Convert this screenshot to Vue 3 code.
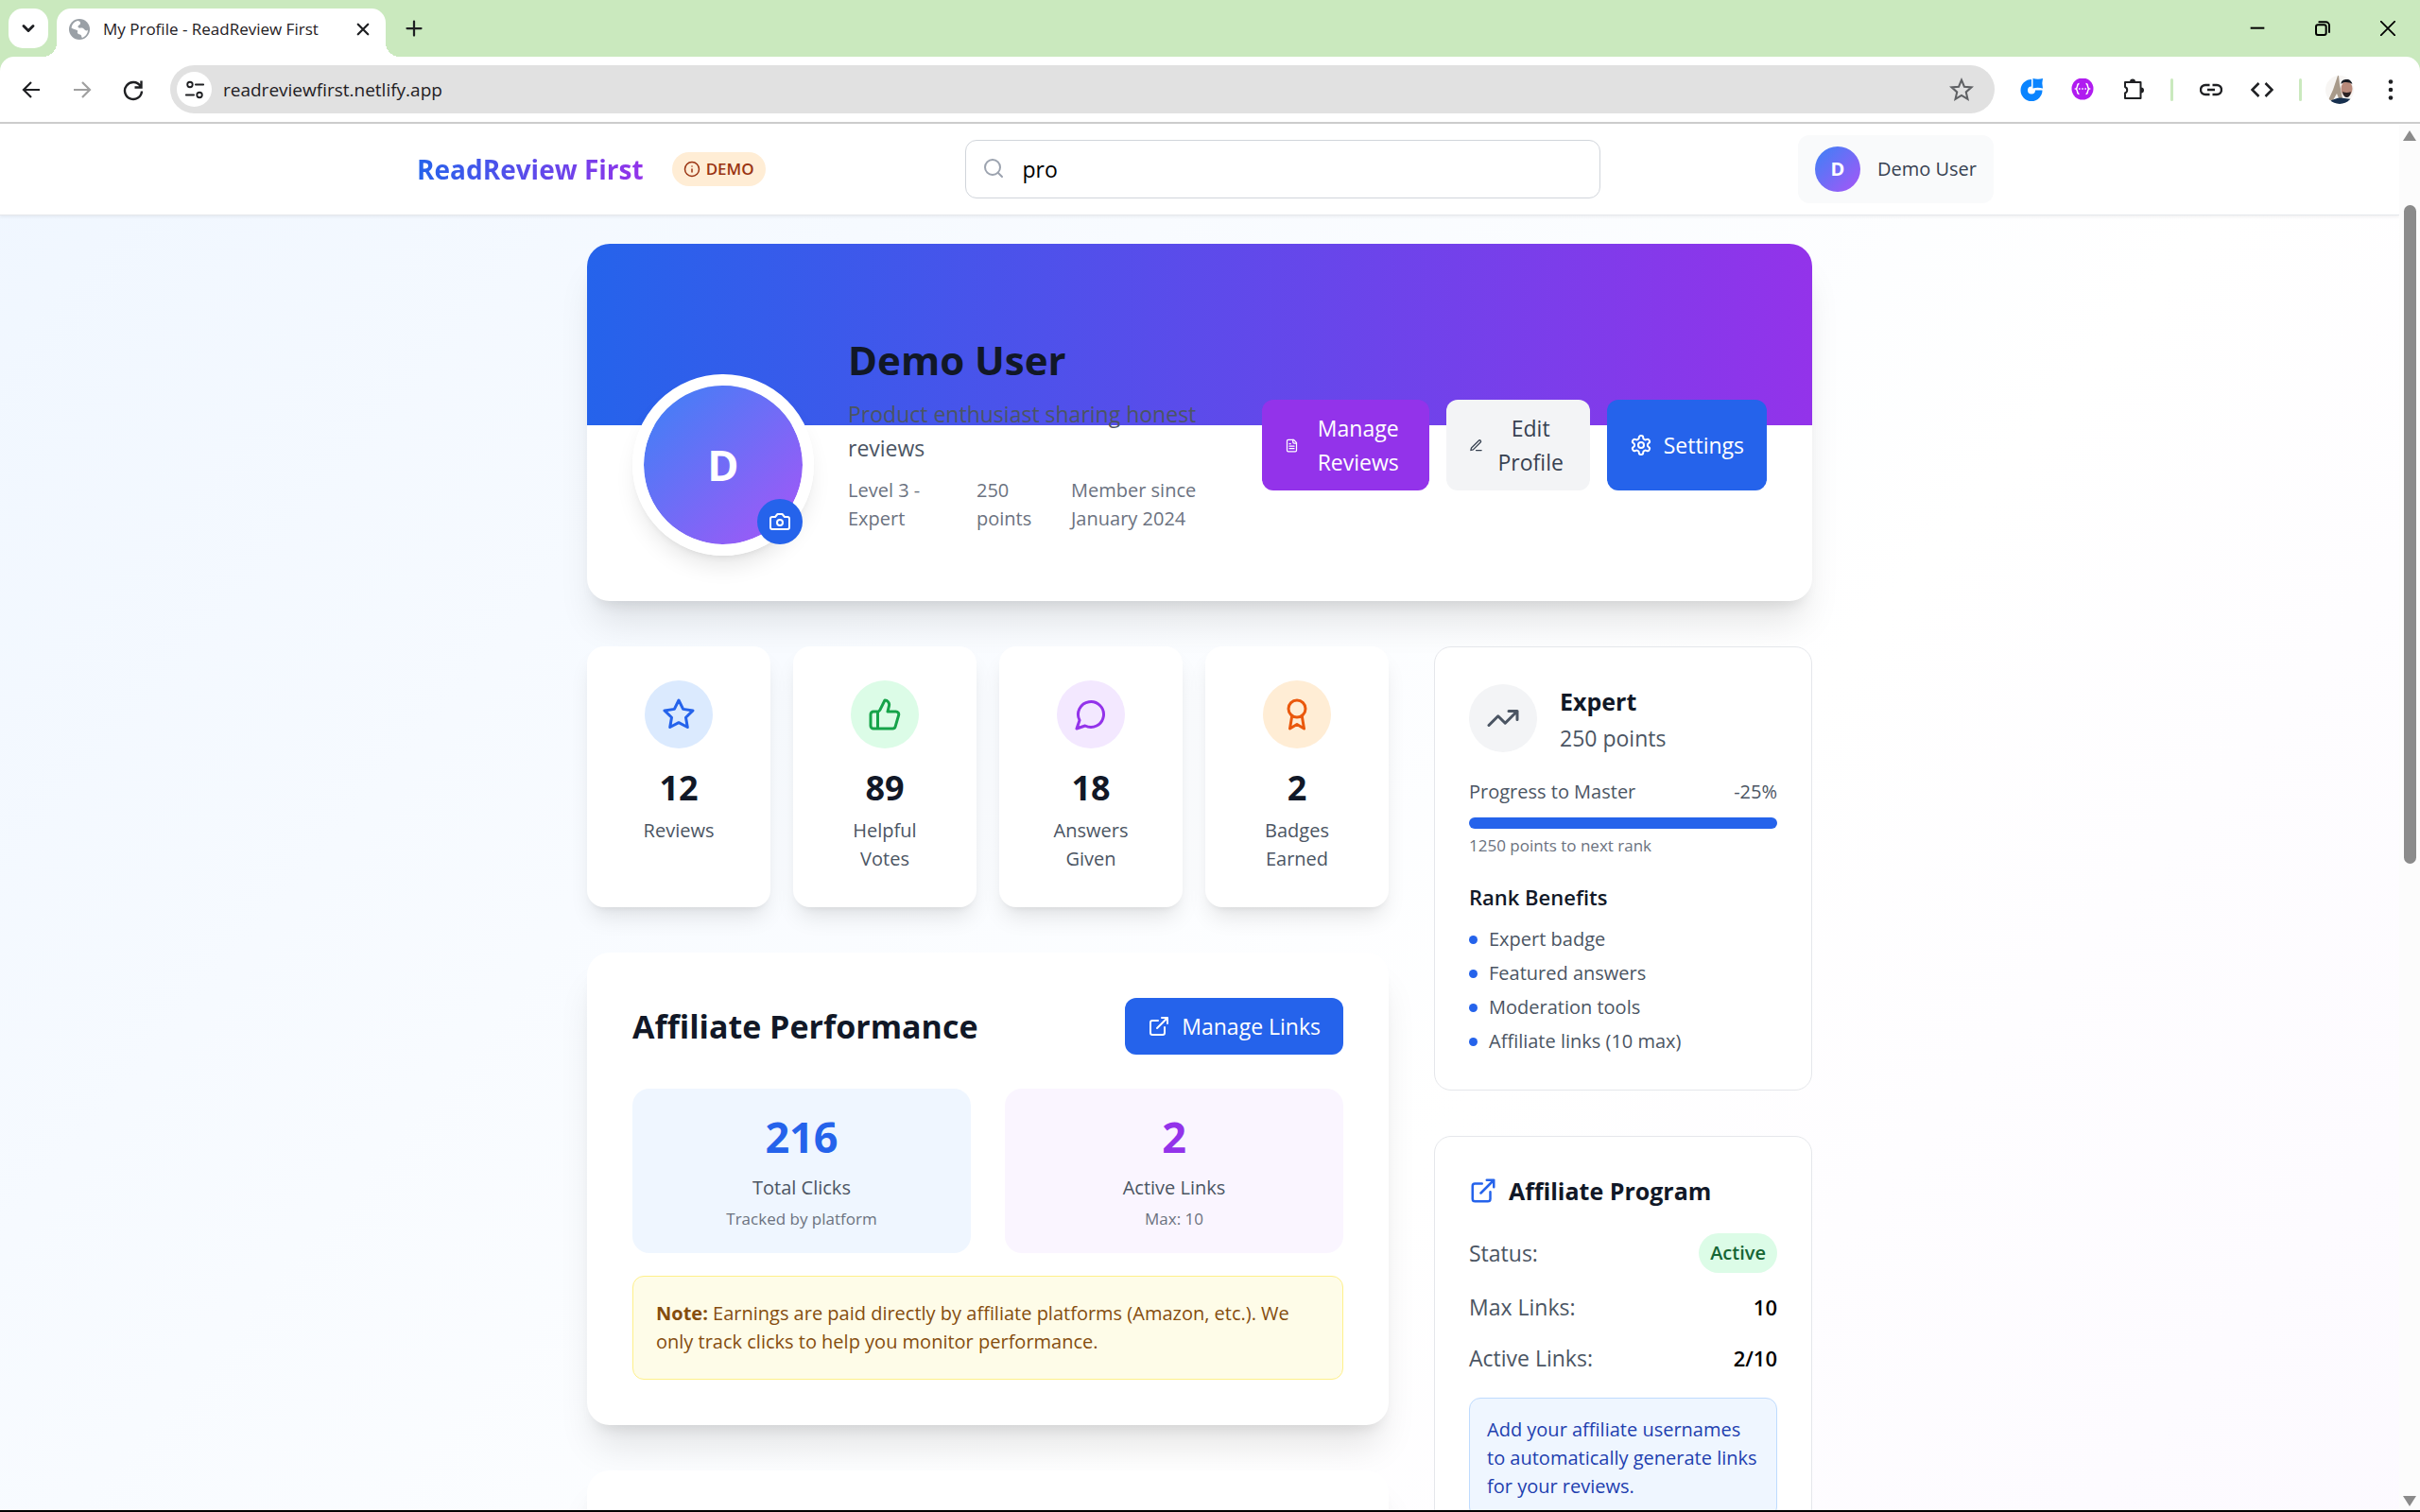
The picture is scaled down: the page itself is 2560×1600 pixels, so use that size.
<template>
  <div class="window">
    <div class="chrome">
      <div class="tabs">
        <button class="tabs__search" aria-label="Search tabs"><Icon name="chevron" class="tabs__chevron" /></button>
        <div class="tab">
          <svg class="tab__favicon" viewBox="0 0 22 22" aria-hidden="true">
            <circle cx="11" cy="11" r="11" fill="#9aa0a6" />
            <path d="M9 2c2 0 3 1 3 2.5s-1 1.5-2 2.5-.5 2 .5 2.5 3-.5 4.5.5 2 2.500 4 2.500l1-1c0 4-3 7.500-6 8.500-1-.5-.5-2-1.500-3s-3-.5-3.500-2 1-2-.5-3S5 11 2.500 9.500C3.500 5 5.500 3 9 2z" fill="#fff" />
          </svg>
          <span class="tab__title">My Profile - ReadReview First</span>
          <button class="tab__close" aria-label="Close tab"><Icon name="x" /></button>
        </div>
        <button class="tabs__new" aria-label="New tab"><Icon name="plus" /></button>
        <div class="controls">
          <button class="controls__btn" aria-label="Minimize"><Icon name="minimize" /></button>
          <button class="controls__btn" aria-label="Restore"><Icon name="restore" /></button>
          <button class="controls__btn" aria-label="Close"><Icon name="close" /></button>
        </div>
      </div>

      <div class="toolbar">
        <button class="toolbar__btn" aria-label="Back"><Icon name="back" /></button>
        <button class="toolbar__btn toolbar__btn--off" aria-label="Forward"><Icon name="forward" /></button>
        <button class="toolbar__btn" aria-label="Reload"><Icon name="reload" /></button>
        <div class="omnibox">
          <button class="omnibox__site" aria-label="Site information"><Icon name="tune" /></button>
          <input class="omnibox__input" type="text" aria-label="Address" value="readreviewfirst.netlify.app">
          <button class="omnibox__star" aria-label="Bookmark"><Icon name="bookmark" /></button>
        </div>
        <button class="toolbar__btn" aria-label="Extension">
          <svg viewBox="0 0 24 24">
            <path d="M12 1A11.5 11.5 0 1 0 23.5 12.5H16A4 4 0 1 1 12 8.5z" fill="#0a84ff" />
            <path d="M13.5 0q5.500 1.500 10.500 0-1.500 5.500 0 10.500-5.500-1.500-10.500 0z" fill="#0a84ff" />
          </svg>
        </button>
        <button class="toolbar__btn" aria-label="JSON viewer">
          <svg viewBox="0 0 24 24">
            <circle cx="12" cy="11" r="11.5" fill="#b01cf0" />
            <path d="M8.5 5.500c-3 0-1 4.500-3.500 5.500 2.500 1 .5 5.500 3.500 5.500M15.500 5.500c3 0 1 4.500 3.500 5.500-2.500 1-.5 5.500-3.500 5.500" fill="none" stroke="#fff" stroke-width="1.5" />
            <path d="M8 11h1.6M11.200 11h1.6M14.400 11H16" stroke="#fff" stroke-width="1.6" />
          </svg>
        </button>
        <button class="toolbar__btn" aria-label="Extensions"><Icon name="puzzle" /></button>
        <span class="toolbar__sep" />
        <button class="toolbar__btn" aria-label="Copy link"><Icon name="link" /></button>
        <button class="toolbar__btn" aria-label="Developer tools"><Icon name="code" /></button>
        <span class="toolbar__sep" />
        <button class="toolbar__btn" aria-label="Profile">
          <svg class="toolbar__photo" viewBox="0 0 30 30">
            <rect width="30" height="30" fill="#f7f5f3" />
            <path d="M13 0h1l1 9 3 15h-4l-2-5-4 7H3l5-11z" fill="#a89a8a" />
            <ellipse cx="22.5" cy="14" rx="6" ry="8" fill="#b88a7b" />
            <path d="M16.5 9c0-4 3-5 6-5s6 1 6 5c-3-2-9-3-12 0z" fill="#161a22" />
            <path d="M18 17q4.500 2 9 0-1 6-4.500 6T18 17z" fill="#2b2224" />
            <path d="M3 28q10-6 17-4l8 1v5H3z" fill="#17304f" />
          </svg>
        </button>
        <button class="toolbar__btn" aria-label="Menu"><Icon name="dots" /></button>
      </div>
    </div>

    <div class="viewport">
      <div class="page">
        <header class="header">
          <div class="header__inner">
            <div class="header__left">
              <a class="brand" href="#">ReadReview First</a>
              <span class="demo"><Icon name="info" class="demo__icon" />DEMO</span>
            </div>
            <div class="search">
              <Icon name="search" class="search__icon" />
              <input class="search__input" type="text" aria-label="Search" value="pro">
            </div>
            <button class="user">
              <span class="user__avatar">D</span>
              <span>Demo User</span>
            </button>
          </div>
        </header>

        <main class="main">
          <section class="card profile">
            <div class="profile__banner" />
            <div class="profile__row">
              <div class="profile__who">
                <div class="avatar">
                  D
                  <button class="avatar__camera" aria-label="Change photo"><Icon name="camera" /></button>
                </div>
                <div class="profile__info">
                  <h1 class="profile__name">Demo User</h1>
                  <p class="profile__bio">Product enthusiast sharing honest reviews</p>
                  <div class="profile__meta">
                    <span>Level 3 - Expert</span>
                    <span>250 points</span>
                    <span>Member since January 2024</span>
                  </div>
                </div>
              </div>
              <div class="profile__actions">
                <button class="btn btn--purple btn--wrap"><Icon name="file" class="btn__icon--sm" /><span class="btn__manage">Manage Reviews</span></button>
                <button class="btn btn--gray btn--wrap"><Icon name="edit" class="btn__icon--sm" /><span class="btn__edit">Edit Profile</span></button>
                <button class="btn btn--blue"><Icon name="settings" class="btn__icon" />Settings</button>
              </div>
            </div>
          </section>

          <div class="columns">
            <div class="left">
              <div class="stats">
                <div v-for="s in stats" :key="s.label" class="card stat">
                  <div class="stat__circle" :class="`stat__circle--${s.tone}`"><Icon :name="s.icon" /></div>
                  <div class="stat__value">{{ s.value }}</div>
                  <div class="stat__label">{{ s.label }}</div>
                </div>
              </div>

              <section class="card perf">
                <div class="perf__head">
                  <h2 class="perf__title">Affiliate Performance</h2>
                  <button class="btn btn--blue"><Icon name="external" class="btn__icon" />Manage Links</button>
                </div>
                <div class="perf__tiles">
                  <div v-for="t in tiles" :key="t.label" class="tile" :class="`tile--${t.tone}`">
                    <div class="tile__value">{{ t.value }}</div>
                    <div class="tile__label">{{ t.label }}</div>
                    <div class="tile__sub">{{ t.sub }}</div>
                  </div>
                </div>
                <p class="note"><strong>Note:</strong> Earnings are paid directly by affiliate platforms (Amazon, etc.). We only track clicks to help you monitor performance.</p>
              </section>

              <section class="card perf" />
            </div>

            <aside class="right">
              <section class="panel">
                <div class="rank">
                  <div class="rank__circle"><Icon name="trend" /></div>
                  <div>
                    <h3 class="panel__title">Expert</h3>
                    <p class="rank__points">250 points</p>
                  </div>
                </div>
                <div class="progress__row"><span>Progress to Master</span><span>-25%</span></div>
                <div class="progress__bar" />
                <p class="progress__hint">1250 points to next rank</p>
                <h4 class="benefits__title">Rank Benefits</h4>
                <ul class="benefits">
                  <li v-for="b in benefits" :key="b">{{ b }}</li>
                </ul>
              </section>

              <section class="panel">
                <h3 class="panel__title program__title"><Icon name="external" class="program__icon" />Affiliate Program</h3>
                <dl class="program">
                  <div><dt>Status:</dt><dd class="program__active">Active</dd></div>
                  <div><dt>Max Links:</dt><dd>10</dd></div>
                  <div><dt>Active Links:</dt><dd>2/10</dd></div>
                </dl>
                <p class="program__tip">Add your affiliate usernames to automatically generate links for your reviews.</p>
              </section>
            </aside>
          </div>
        </main>
      </div>

      <div class="scrollbar">
        <span class="scrollbar__up" />
        <span class="scrollbar__track"><span class="scrollbar__thumb" /></span>
        <span class="scrollbar__down" />
      </div>
    </div>
  </div>
</template>

<script setup>
import { h } from 'vue'

const icons = {
  chevron: '<path d="m6 9 6 6 6-6" stroke-width="3.5"/>',
  x: '<path d="M5 5l14 14M19 5 5 19" stroke-width="3"/>',
  plus: '<path d="M12 2v20M2 12h20" stroke-width="3"/>',
  minimize: '<path d="M1 11.5h22" stroke-width="3" stroke-linecap="butt"/>',
  restore: '<rect x="1.5" y="6.5" width="16" height="16" rx="3" stroke-width="3"/><path d="M6.5 2H17a5.5 5.5 0 0 1 5.5 5.5V18" stroke-width="3"/>',
  close: '<path d="M1 1l22 22M23 1 1 23" stroke-width="2.6"/>',
  back: '<path d="M21 12H4M12 4l-8 8 8 8" stroke-width="2.2" stroke-linejoin="miter" stroke-linecap="butt"/>',
  forward: '<path d="M3 12h17M12 4l8 8-8 8" stroke-width="2.2" stroke-linejoin="miter" stroke-linecap="butt"/>',
  reload: '<path d="M19.5 8A9 9 0 1 0 21 13.5M20.5 2.5v7h-7" stroke-width="2.4" stroke-linecap="butt" stroke-linejoin="miter"/>',
  tune: '<circle cx="6.5" cy="6" r="3"/><path d="M13 6h9M2 18h9"/><circle cx="17.5" cy="18" r="3"/>',
  bookmark: '<path d="M12 2.5l2.7 6.5 7 .6-5.3 4.6 1.6 6.9-6-3.7-6 3.7 1.6-6.9-5.3-4.6 7-.6z" stroke-width="1.9" stroke-linejoin="miter"/>',
  puzzle: '<path d="M3 4h16.5v17H3v-5.5a3.5 3.5 0 0 0 0-6.5z"/><path d="M8 3.5a3 3 0 0 1 6 0zM20 9.5a3 3 0 0 1 0 6z" fill="currentColor" stroke="none"/>',
  link: '<path d="M10.5 7H6a5 5 0 0 0 0 10h4.5M13.5 7H18a5 5 0 0 1 0 10h-4.5M8 12h8" stroke-width="2.4" stroke-linecap="butt"/>',
  code: '<path d="M8.5 5 1.5 12l7 7M15.5 5l7 7-7 7" stroke-width="2.5" stroke-linecap="butt" stroke-linejoin="miter"/>',
  dots: '<g fill="currentColor" stroke="none"><circle cx="12" cy="3.5" r="2.3"/><circle cx="12" cy="12" r="2.3"/><circle cx="12" cy="20.5" r="2.3"/></g>',
  info: '<circle cx="12" cy="12" r="10"/><path d="M12 16v-4M12 8h.01"/>',
  search: '<circle cx="11" cy="11" r="8"/><path d="m21 21-4.3-4.3"/>',
  camera: '<path d="M14.5 4h-5L7 7H4a2 2 0 0 0-2 2v9a2 2 0 0 0 2 2h16a2 2 0 0 0 2-2V9a2 2 0 0 0-2-2h-3l-2.5-3z"/><circle cx="12" cy="13" r="3"/>',
  file: '<path d="M15 2H6a2 2 0 0 0-2 2v16a2 2 0 0 0 2 2h12a2 2 0 0 0 2-2V7z"/><path d="M14 2v4a2 2 0 0 0 2 2h4M10 9H8M16 13H8M16 17H8"/>',
  edit: '<path d="M12 20h9M16.5 3.5a2.12 2.12 0 0 1 3 3L7 19l-4 1 1-4z"/>',
  settings: '<path d="M12.22 2h-.44a2 2 0 0 0-2 2v.18a2 2 0 0 1-1 1.73l-.43.25a2 2 0 0 1-2 0l-.15-.08a2 2 0 0 0-2.73.73l-.22.38a2 2 0 0 0 .73 2.73l.15.1a2 2 0 0 1 1 1.72v.51a2 2 0 0 1-1 1.74l-.15.09a2 2 0 0 0-.73 2.73l.22.38a2 2 0 0 0 2.73.73l.15-.08a2 2 0 0 1 2 0l.43.25a2 2 0 0 1 1 1.73V20a2 2 0 0 0 2 2h.44a2 2 0 0 0 2-2v-.18a2 2 0 0 1 1-1.73l.43-.25a2 2 0 0 1 2 0l.15.08a2 2 0 0 0 2.73-.73l.22-.39a2 2 0 0 0-.73-2.73l-.15-.08a2 2 0 0 1-1-1.74v-.5a2 2 0 0 1 1-1.74l.15-.09a2 2 0 0 0 .73-2.73l-.22-.38a2 2 0 0 0-2.73-.73l-.15.08a2 2 0 0 1-2 0l-.43-.25a2 2 0 0 1-1-1.73V4a2 2 0 0 0-2-2z"/><circle cx="12" cy="12" r="3"/>',
  star: '<path d="m12 2 3.09 6.26L22 9.27l-5 4.87 1.18 6.88L12 17.77l-6.18 3.25L7 14.14 2 9.27l6.91-1.01z"/>',
  thumb: '<path d="M7 10v12M15 5.88 14 10h5.83a2 2 0 0 1 1.92 2.56l-2.33 8A2 2 0 0 1 17.5 22H4a2 2 0 0 1-2-2v-8a2 2 0 0 1 2-2h2.76a2 2 0 0 0 1.79-1.11L12 2a3.13 3.13 0 0 1 3 3.88z"/>',
  message: '<path d="M7.9 20A9 9 0 1 0 4 16.1L2 22z"/>',
  award: '<circle cx="12" cy="8" r="6"/><path d="M15.48 12.89 17 22l-5-3-5 3 1.52-9.11"/>',
  external: '<path d="M15 3h6v6M10 14 21 3M18 13v6a2 2 0 0 1-2 2H5a2 2 0 0 1-2-2V8a2 2 0 0 1 2-2h6"/>',
  trend: '<path d="m22 7-8.5 8.5-5-5L2 17M16 7h6v6"/>',
}

const Icon = (props) => h('svg', {
  viewBox: '0 0 24 24',
  fill: 'none',
  stroke: 'currentColor',
  'stroke-width': 2,
  'stroke-linecap': 'round',
  'stroke-linejoin': 'round',
  'aria-hidden': 'true',
  innerHTML: icons[props.name],
})
Icon.props = ['name']

const stats = [
  { icon: 'star', tone: 'blue', value: 12, label: 'Reviews' },
  { icon: 'thumb', tone: 'green', value: 89, label: 'Helpful Votes' },
  { icon: 'message', tone: 'purple', value: 18, label: 'Answers Given' },
  { icon: 'award', tone: 'orange', value: 2, label: 'Badges Earned' },
]

const tiles = [
  { tone: 'blue', value: 216, label: 'Total Clicks', sub: 'Tracked by platform' },
  { tone: 'purple', value: 2, label: 'Active Links', sub: 'Max: 10' },
]

const benefits = ['Expert badge', 'Featured answers', 'Moderation tools', 'Affiliate links (10 max)']
</script>

<style>
body { margin: 0; }
</style>

<style scoped>
.window {
  --color-text: #111827;
  --color-body: #4b5563;
  --color-muted: #6b7280;
  --color-blue: #2563eb;
  --color-purple: #9333ea;
  --color-strip: #cae9be;
  --shadow-xl: 0 30px 38px -8px rgba(0, 0, 0, 0.1), 0 12px 15px -9px rgba(0, 0, 0, 0.1);
  --shadow-lg: 0 15px 23px -5px rgba(0, 0, 0, 0.1), 0 6px 9px -6px rgba(0, 0, 0, 0.1);
  display: flex;
  flex-direction: column;
  height: 100vh;
  box-sizing: border-box;
  border-bottom: 2px solid #000;
  overflow: hidden;
  background: #fff;
  color: #000;
  font-family: 'Segoe UI', 'Open Sans', 'Noto Sans', sans-serif;
  font-size: 23px;
  line-height: 36px;
}
.window *, .window *::before, .window *::after { box-sizing: border-box; }
h1, h2, h3, h4, p, ul, dl, dd { margin: 0; padding: 0; }
button {
  border: 0;
  padding: 0;
  background: none;
  font: inherit;
  color: inherit;
  cursor: pointer;
}
input { font: inherit; color: inherit; min-width: 0; }
svg { display: block; flex: none; }

/* browser chrome */
.chrome { flex: none; background: var(--color-strip); border-bottom: 2px solid #ccc; color: #1f2023; }
.tabs { display: flex; align-items: flex-start; height: 60px; padding: 9px 0 0 9px; }
.tabs__search {
  display: grid;
  place-items: center;
  width: 42px;
  height: 42px;
  margin-right: 9px;
  border-radius: 15px;
  background: #fff;
}
.tabs__chevron { width: 20px; height: 20px; }
.tab {
  position: relative;
  display: flex;
  align-items: center;
  gap: 14px;
  width: 348px;
  height: 51px;
  padding: 0 15px 8px 13px;
  border-radius: 15px 15px 0 0;
  background: #fff;
}
.tab::before, .tab::after {
  content: '';
  position: absolute;
  bottom: 0;
  width: 15px;
  height: 15px;
}
.tab::before { left: -15px; background: radial-gradient(circle at 0 0, transparent 15px, #fff 15px); }
.tab::after { right: -15px; background: radial-gradient(circle at 100% 0, transparent 15px, #fff 15px); }
.tab__favicon { width: 22px; height: 22px; }
.tab__title { flex: 1; font-size: 17px; line-height: 24px; white-space: nowrap; }
.tab__close svg { width: 18px; height: 18px; }
.tabs__new { margin-left: 21px; }
.tabs__new svg { width: 18px; height: 42px; }
.controls { display: flex; margin-left: auto; color: #000; }
.controls__btn { display: grid; place-items: center; width: 69px; height: 42px; }
.controls__btn svg { width: 16px; height: 16px; }

.toolbar {
  display: flex;
  align-items: center;
  height: 69px;
  padding: 0 4px 0 6px;
  border-radius: 15px 15px 0 0;
  background: #fff;
}
.toolbar__btn { display: grid; place-items: center; flex: none; width: 54px; height: 51px; }
.toolbar__btn svg { width: 24px; height: 24px; }
.toolbar__btn--off { color: #a0a0a0; }
.toolbar__btn .toolbar__photo { width: 30px; height: 30px; border-radius: 50%; }
.toolbar__sep { flex: none; width: 3px; height: 24px; margin: 0 13px 0 12px; border-radius: 2px; background: var(--color-strip); }
.omnibox {
  display: flex;
  align-items: center;
  flex: 1;
  height: 51px;
  margin: 0 12px;
  padding: 0 22px 0 7px;
  border-radius: 26px;
  background: #e1e1e1;
}
.omnibox__site {
  display: grid;
  place-items: center;
  width: 37px;
  height: 37px;
  margin-right: 12px;
  border-radius: 50%;
  background: #fff;
}
.omnibox__site svg { width: 22px; height: 22px; }
.omnibox__input { flex: 1; padding: 0; border: 0; background: none; font-size: 19px; outline: none; }
.omnibox__star svg { width: 26px; height: 26px; color: #5f6164; }

/* page */
.viewport { display: flex; flex: 1; min-height: 0; }
.page {
  flex: 1;
  min-width: 0;
  overflow: hidden;
  background: linear-gradient(to bottom right, #eff6ff, #fff, #faf5ff) 0 -130px / 100% 3000px no-repeat;
}
.header {
  position: relative;
  height: 97px;
  border-bottom: 1px solid #e5e7eb;
  background: #fff;
  box-shadow: 0 2px 3px rgba(0, 0, 0, 0.05);
}
.header__inner {
  display: flex;
  align-items: center;
  justify-content: space-between;
  max-width: 1680px;
  height: 96px;
  margin: 0 auto;
  padding-left: 12px;
}
.header__left { display: flex; align-items: center; gap: 30px; width: 370px; }
.brand {
  background: linear-gradient(to right, var(--color-blue), var(--color-purple));
  -webkit-background-clip: text;
  background-clip: text;
  color: transparent;
  font-size: 28px;
  font-weight: 700;
  line-height: 42px;
  text-decoration: none;
  white-space: nowrap;
}
.demo {
  display: flex;
  align-items: center;
  gap: 6px;
  padding: 6px 12px;
  border-radius: 18px;
  background: #ffedd5;
  color: #9a3412;
  font-size: 17px;
  font-weight: 600;
  line-height: 24px;
}
.demo__icon { width: 18px; height: 18px; }
.search { position: relative; width: 672px; }
.search__icon { position: absolute; left: 18px; top: 18px; width: 24px; height: 24px; color: #9ca3af; }
.search__input {
  width: 100%;
  height: 62px;
  padding: 0 24px 0 60px;
  border: 1px solid #d1d5db;
  border-radius: 12px;
  background: #fff;
  outline: none;
}
.user {
  display: flex;
  align-items: center;
  gap: 18px;
  padding: 12px 18px;
  border-radius: 12px;
  background: #f9fafb;
  color: #374151;
  font-size: 20px;
  font-weight: 500;
}
.user__avatar {
  display: grid;
  place-items: center;
  width: 48px;
  height: 48px;
  border-radius: 50%;
  background: linear-gradient(to bottom right, #3b82f6, #a855f7);
  color: #fff;
  font-weight: 700;
}

.main { max-width: 1344px; margin: 0 auto; padding: 30px 24px; }
.card { border-radius: 24px; background: #fff; box-shadow: var(--shadow-xl); }

.btn {
  display: flex;
  align-items: center;
  justify-content: center;
  gap: 12px;
  padding: 12px 24px;
  border-radius: 12px;
  color: #fff;
  white-space: nowrap;
}
.btn--wrap { white-space: normal; }
.btn--purple { background: var(--color-purple); }
.btn--gray { background: #f3f4f6; color: #374151; }
.btn--blue { background: var(--color-blue); }
.btn__icon { width: 24px; height: 24px; }
.btn__icon--sm { width: 15px; height: 15px; }
.btn__manage { width: 102px; }
.btn__edit { width: 77px; }

.profile { overflow: hidden; }
.profile__banner { height: 192px; background: linear-gradient(to right, var(--color-blue), var(--color-purple)); }
.profile__row {
  display: flex;
  align-items: center;
  justify-content: space-between;
  padding: 0 48px 48px;
  margin-top: -96px;
}
.profile__who { display: flex; align-items: flex-end; gap: 36px; }
.avatar {
  position: relative;
  display: grid;
  place-items: center;
  flex: none;
  width: 192px;
  height: 192px;
  border: 12px solid #fff;
  border-radius: 50%;
  background: linear-gradient(to bottom right, #3b82f6, #a855f7) padding-box;
  box-shadow: var(--shadow-lg);
  color: #fff;
  font-size: 45px;
  font-weight: 700;
}
.avatar__camera {
  position: absolute;
  right: 0;
  bottom: 0;
  display: grid;
  place-items: center;
  width: 48px;
  height: 48px;
  border-radius: 50%;
  background: var(--color-blue);
}
.avatar__camera svg { width: 24px; height: 24px; }
.profile__info { width: 402px; padding-bottom: 24px; }
.profile__name { color: var(--color-text); font-size: 42px; line-height: 54px; }
.profile__bio { margin: 12px 0; color: var(--color-body); }
.profile__meta {
  display: grid;
  grid-template-columns: 100px 64px 1fr;
  gap: 36px;
  color: var(--color-muted);
  font-size: 20px;
  line-height: 30px;
}
.profile__actions { display: flex; align-items: stretch; gap: 18px; }

.columns { display: grid; grid-template-columns: minmax(0, 1fr) 400px; gap: 48px; margin-top: 48px; }
.left, .right { display: flex; flex-direction: column; gap: 48px; }
.stats { display: grid; grid-template-columns: repeat(4, 1fr); gap: 24px; }
.stat { padding: 36px; border-radius: 18px; box-shadow: var(--shadow-lg); text-align: center; }
.stat__circle {
  display: grid;
  place-items: center;
  width: 72px;
  height: 72px;
  margin: 0 auto 18px;
  border-radius: 50%;
}
.stat__circle svg, .rank__circle svg { width: 36px; height: 36px; }
.stat__circle--blue { background: #dbeafe; color: #2563eb; }
.stat__circle--green { background: #dcfce7; color: #16a34a; }
.stat__circle--purple { background: #f3e8ff; color: #9333ea; }
.stat__circle--orange { background: #ffedd5; color: #ea580c; }
.stat__value { margin-bottom: 6px; color: var(--color-text); font-size: 36px; font-weight: 700; line-height: 48px; }
.stat__label { color: var(--color-body); font-size: 20px; line-height: 30px; }

.perf { padding: 48px; }
.perf__head { display: flex; align-items: center; justify-content: space-between; margin-bottom: 36px; }
.perf__title { color: var(--color-text); font-size: 34px; line-height: 48px; }
.perf__tiles { display: grid; grid-template-columns: 1fr 1fr; gap: 36px; }
.tile { padding: 24px; border-radius: 18px; text-align: center; }
.tile--blue { background: #eff6ff; color: var(--color-blue); }
.tile--purple { background: #faf5ff; color: var(--color-purple); }
.tile__value { margin-bottom: 12px; font-size: 45px; font-weight: 700; line-height: 54px; }
.tile__label { margin-bottom: 6px; color: var(--color-body); font-size: 20px; line-height: 30px; }
.tile__sub { color: var(--color-muted); font-size: 17px; line-height: 24px; }
.note {
  margin-top: 24px;
  padding: 24px;
  border: 1px solid #fef08a;
  border-radius: 12px;
  background: #fefce8;
  color: #854d0e;
  font-size: 20px;
  line-height: 30px;
}

.panel { padding: 36px; border: 1px solid #e5e7eb; border-radius: 18px; background: #fff; }
.panel__title { color: var(--color-text); font-size: 25px; line-height: 42px; }
.rank { display: flex; align-items: center; gap: 24px; margin-bottom: 24px; }
.rank__circle {
  display: grid;
  place-items: center;
  width: 72px;
  height: 72px;
  border-radius: 50%;
  background: #f3f4f6;
  color: var(--color-body);
}
.rank__points { color: var(--color-body); }
.progress__row { display: flex; justify-content: space-between; margin-bottom: 12px; color: var(--color-body); font-size: 20px; line-height: 30px; }
.progress__bar { height: 12px; margin-bottom: 6px; border-radius: 6px; background: var(--color-blue); }
.progress__hint { color: var(--color-muted); font-size: 17px; line-height: 24px; }
.benefits__title { margin: 24px 0 12px; color: var(--color-text); font-size: 22px; font-weight: 600; }
.benefits { display: grid; gap: 6px; list-style: none; color: var(--color-body); font-size: 20px; line-height: 30px; }
.benefits li { display: flex; align-items: center; gap: 12px; }
.benefits li::before { content: ''; width: 9px; height: 9px; border-radius: 50%; background: var(--color-blue); }

.program__title { display: flex; align-items: center; gap: 12px; margin-bottom: 24px; }
.program__icon { width: 30px; height: 30px; color: var(--color-blue); }
.program { display: grid; gap: 18px; margin-bottom: 24px; }
.program div { display: flex; align-items: center; justify-content: space-between; }
.program dt { color: var(--color-body); }
.program dd { font-size: 22px; font-weight: 600; }
.program .program__active {
  padding: 6px 12px;
  border-radius: 21px;
  background: #dcfce7;
  color: #166534;
  font-size: 20px;
  line-height: 30px;
}
.program__tip {
  padding: 18px;
  border: 1px solid #bfdbfe;
  border-radius: 12px;
  background: #eff6ff;
  color: #1e40af;
  font-size: 20px;
  line-height: 30px;
}

/* scrollbar */
.scrollbar { display: flex; flex-direction: column; align-items: center; width: 22px; padding: 7px 0 4px; background: #fcfcfc; }
.scrollbar__up, .scrollbar__down { width: 14px; height: 11px; background: #8b8b8b; clip-path: polygon(50% 0, 100% 100%, 0 100%); }
.scrollbar__down { clip-path: polygon(0 0, 100% 0, 50% 100%); }
.scrollbar__track { flex: 1; padding-top: 68px; }
.scrollbar__thumb { display: block; width: 13px; height: 51%; border-radius: 7px; background: #8b8b8b; }
</style>
